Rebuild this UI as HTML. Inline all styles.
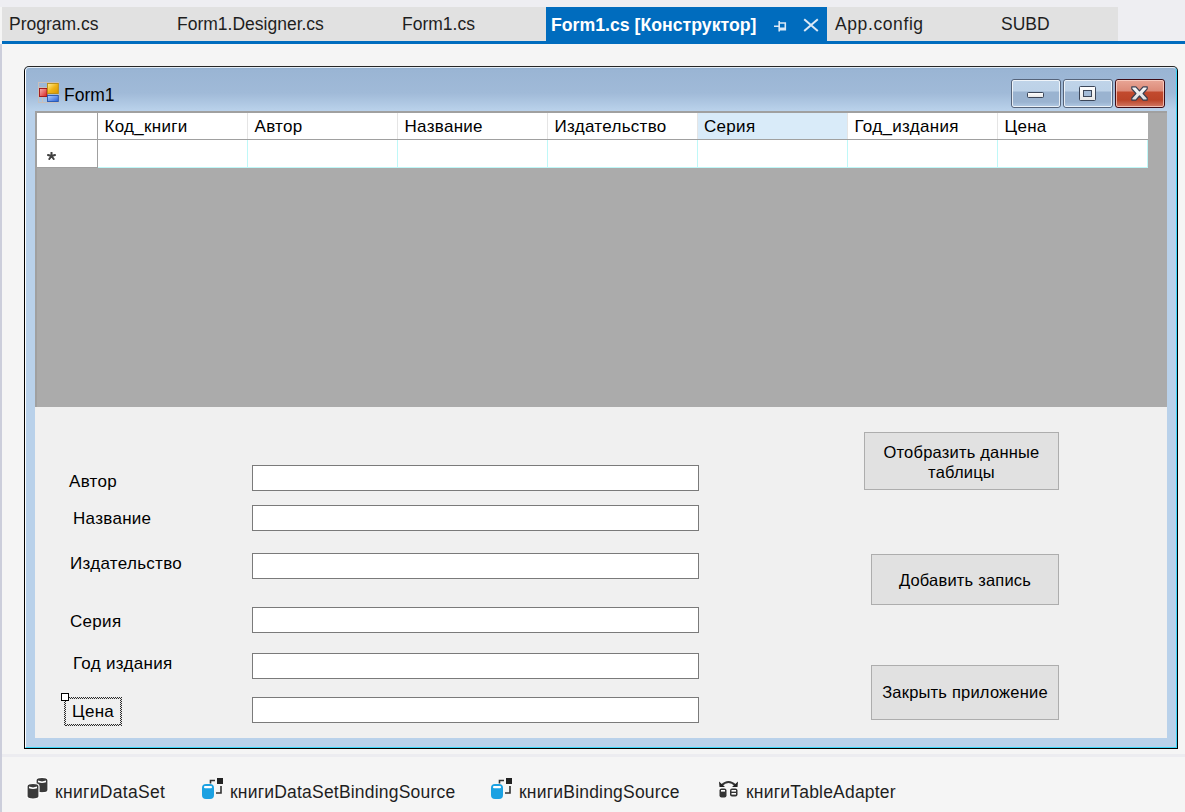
<!DOCTYPE html>
<html><head><meta charset="utf-8">
<style>
*{box-sizing:border-box;margin:0;padding:0}
html,body{width:1185px;height:812px;overflow:hidden;background:#f5f5f5;font-family:"Liberation Sans",sans-serif;color:#000}
.a{position:absolute}
#top{left:0;top:0;width:1185px;height:7px;background:#eeeef2}
#topr{left:1118px;top:0;width:67px;height:41px;background:#eeeef2}
#lstrip{left:0;top:44px;width:2px;height:768px;background:#cccedb}
#tabs{left:2px;top:7px;width:1116px;height:34px;background:#e1e1e1}
#blue{left:2px;top:41px;width:1183px;height:3px;background:#006cbe}
#atab{left:546px;top:7px;width:281px;height:34px;background:#006cbe}
.tt{position:absolute;top:14px;font-size:17.5px;line-height:20px;white-space:nowrap;color:#1e1e1e}
#sep{left:2px;top:754px;width:1183px;height:3px;background:#ececf0}
/* form */
#form{left:24px;top:66px;width:1154px;height:683px;border:1px solid #000;border-top-color:#262626;border-radius:5px 5px 0 0;overflow:hidden;
 background:linear-gradient(#8eaecf 0px,#9ab5d4 3px,#a0bad8 26px,#b9d1ea 43px,#b9d1ea 100%)}
#hl{left:0;top:0;width:1152px;height:681px;border-left:1px solid #fff;border-top:1px solid #e4edf6;border-right:1px solid #3ad6f8;border-bottom:1px solid #3ad6f8;border-radius:4px 4px 0 0}
#client{left:35px;top:111px;width:1132px;height:627px;background:#f0f0f0}
#grid{left:35px;top:111px;width:1132px;height:296px;background:#ababab;border-top:2px solid #a0a0a0;border-left:2px solid #a0a0a0}
.hdr{position:absolute;top:113px;height:26px;background:#fff;border-right:1px solid #e5e5e5}
.row{position:absolute;top:140px;height:28px;background:#fff;border-right:1px solid #bff8f8;border-bottom:1px solid #bff8f8}
.ht{position:absolute;top:117px;font-size:17px;letter-spacing:0.3px;line-height:20px;white-space:nowrap}
.lbl{position:absolute;font-size:17px;letter-spacing:0.3px;line-height:20px;white-space:nowrap}
.tb{position:absolute;left:252px;width:447px;height:26px;border:1px solid #7a7a7a;background:#fff}
.btn{position:absolute;border:1px solid #adadad;background:#e1e1e1;font-size:16.5px;letter-spacing:0.2px;text-align:center;display:flex;align-items:center;justify-content:center;line-height:20px}
.tray{position:absolute;top:782px;font-size:17.5px;letter-spacing:0.2px;line-height:20px;white-space:nowrap;color:#1e1e1e}
.wb{position:absolute;top:79px;width:50px;height:29px;border:1px solid #56647a;border-radius:3px;overflow:hidden}
.wbi{position:absolute;left:0;top:0;width:48px;height:27px;border:1px solid rgba(255,255,255,.75);border-radius:2px}
.chk{background:repeating-conic-gradient(#2a2a2a 0 25%,#e8e8e8 0 50%) 0 0/2px 2px}
</style></head><body>
<div id="top" class="a"></div>
<div id="topr" class="a"></div>
<div id="tabs" class="a"></div>
<div id="atab" class="a"></div>
<div id="blue" class="a"></div>
<div id="lstrip" class="a"></div>
<div class="tt" style="left:9px">Program.cs</div>
<div class="tt" style="left:177px">Form1.Designer.cs</div>
<div class="tt" style="left:402px">Form1.cs</div>
<div class="tt" style="left:551px;top:15px;color:#fff;font-weight:bold;font-size:17.7px">Form1.cs [Конструктор]</div>
<div class="tt" style="left:835px;letter-spacing:0.6px">App.config</div>
<div class="tt" style="left:1001px">SUBD</div>
<!-- pin -->
<svg class="a" style="left:772px;top:19px" width="16" height="14" viewBox="0 0 16 14">
 <path d="M2 7.2H7M7.2 2V12.5M7.5 4H13.3V10.6H7.5M7.5 9.2H13.3" fill="none" stroke="#dce9f6" stroke-width="1.6"/>
</svg>
<!-- close x -->
<svg class="a" style="left:802px;top:18px" width="17" height="15" viewBox="0 0 17 15">
 <path d="M2.2 1.2L15.8 13M15.8 1.2L2.2 13" fill="none" stroke="#dce9f6" stroke-width="2"/>
</svg>

<div id="form" class="a"><div id="hl" class="a"></div></div>
<!-- form icon -->
<svg class="a" style="left:38px;top:82px" width="21" height="21" viewBox="0 0 21 21">
 <defs>
  <linearGradient id="gr" x1="0" y1="0" x2="1" y2="1"><stop offset="0" stop-color="#f6b8b8"/><stop offset="1" stop-color="#d8201c"/></linearGradient>
  <linearGradient id="gy" x1="0" y1="0" x2="1" y2="1"><stop offset="0" stop-color="#fff2a0"/><stop offset=".5" stop-color="#f0b418"/><stop offset="1" stop-color="#d89600"/></linearGradient>
  <linearGradient id="gb" x1="0" y1="0" x2="1" y2="1"><stop offset="0" stop-color="#b0d0ff"/><stop offset="1" stop-color="#2860d8"/></linearGradient>
 </defs>
 <rect x="0.5" y="0.5" width="20" height="20" fill="none" stroke="#c8c0bc" stroke-width="1"/>
 <path d="M4.5 14V20.5M0.5 5.5H9" stroke="#c8c0bc" stroke-width="1"/>
 <rect x="1.5" y="6.5" width="7.5" height="8" fill="url(#gr)" stroke="#a01010" stroke-width="0.9"/>
 <rect x="9.5" y="1.5" width="10.8" height="10" fill="url(#gy)" stroke="#b88a10" stroke-width="0.9"/>
 <rect x="9.5" y="13.5" width="10.8" height="6" fill="url(#gb)" stroke="#2456b0" stroke-width="0.9"/>
</svg>
<div class="a" style="left:64px;top:85px;font-size:17.5px;line-height:20px;color:#000">Form1</div>
<!-- window buttons -->
<div class="wb" style="left:1011px;background:linear-gradient(#c0d4e9 0,#bcd1e7 11px,#9ab3d0 12px,#9ab3d0 22px,#b3cbe5 27px)"><div class="wbi"></div></div>
<div class="a" style="left:1027px;top:92px;width:17px;height:6px;background:linear-gradient(#fff,#e6e6e6);border:1px solid #3c4658;border-radius:1.5px"></div>
<div class="wb" style="left:1063px;background:linear-gradient(#c0d4e9 0,#bcd1e7 11px,#9ab3d0 12px,#9ab3d0 22px,#b3cbe5 27px)"><div class="wbi"></div></div>
<div class="a" style="left:1079px;top:86px;width:17px;height:15px;background:linear-gradient(#fff,#e8e8e8);border:1px solid #3c4658;border-radius:1.5px"></div>
<div class="a" style="left:1083px;top:90px;width:9px;height:7px;background:#a4bcd8;border:1px solid #3c4658"></div>
<div class="wb" style="left:1115px;border-color:#3e0c16;background:linear-gradient(#e8a696 0,#dc8a78 11px,#c24a2e 12px,#bb4428 20px,#d27a66 27px)"><div class="wbi" style="border-color:rgba(255,220,210,.7)"></div></div>
<svg class="a" style="left:1130px;top:85px" width="19" height="17" viewBox="0 0 19 17">
 <defs><linearGradient id="gx" x1="0" y1="0" x2="0" y2="1"><stop offset="0" stop-color="#fafafa"/><stop offset="1" stop-color="#dcdcdc"/></linearGradient></defs>
 <path d="M1.8 1.8H5.9L9.5 5.9L13.1 1.8H17.2V3.9L13.1 8.5L17.2 13V15.1H13.1L9.5 11L5.9 15.1H1.8V13L5.9 8.5L1.8 3.9Z" fill="url(#gx)" stroke="#3a3f50" stroke-width="1.2" stroke-linejoin="round"/>
</svg>

<div id="client" class="a"></div>
<div id="grid" class="a"></div>
<!-- grid header -->
<div class="hdr" style="left:37px;width:61px;border-right:1px solid #a0a0a0"></div>
<div class="hdr" style="left:98px;width:150px"></div>
<div class="hdr" style="left:248px;width:150px"></div>
<div class="hdr" style="left:398px;width:150px"></div>
<div class="hdr" style="left:548px;width:150px"></div>
<div class="hdr" style="left:698px;width:150px;background:#d9ebf9"></div>
<div class="hdr" style="left:848px;width:150px"></div>
<div class="hdr" style="left:998px;width:150px;border-right:none"></div>
<div class="a" style="left:37px;top:139px;width:1111px;height:1px;background:#a0a0a0"></div>
<div class="row" style="left:37px;width:61px;border-right:1px solid #a0a0a0;border-bottom-color:#a0a0a0"></div>
<div class="row" style="left:98px;width:150px"></div>
<div class="row" style="left:248px;width:150px"></div>
<div class="row" style="left:398px;width:150px"></div>
<div class="row" style="left:548px;width:150px"></div>
<div class="row" style="left:698px;width:150px"></div>
<div class="row" style="left:848px;width:150px"></div>
<div class="row" style="left:998px;width:150px"></div>
<div class="ht" style="left:104.5px">Код_книги</div>
<div class="ht" style="left:254.5px">Автор</div>
<div class="ht" style="left:404.5px">Название</div>
<div class="ht" style="left:554.5px">Издательство</div>
<div class="ht" style="left:704px">Серия</div>
<div class="ht" style="left:854.5px">Год_издания</div>
<div class="ht" style="left:1004.5px">Цена</div>
<svg class="a" style="left:47px;top:152px" width="9" height="8" viewBox="0 0 9 8">
 <path d="M4.5 0.5V4M4.5 4L1 3M4.5 4L8 3M4.5 4L2.3 7M4.5 4L6.7 7" stroke="#404040" stroke-width="2" stroke-linecap="round"/>
</svg>

<div class="lbl" style="left:69px;top:472px">Автор</div>
<div class="lbl" style="left:73px;top:509px">Название</div>
<div class="lbl" style="left:70px;top:554px">Издательство</div>
<div class="lbl" style="left:70px;top:612px">Серия</div>
<div class="lbl" style="left:73px;top:654px">Год издания</div>
<div class="lbl" style="left:72px;top:702px">Цена</div>
<!-- selection -->
<div class="a chk" style="left:64px;top:697px;width:58px;height:2px"></div>
<div class="a chk" style="left:64px;top:724px;width:58px;height:2px"></div>
<div class="a chk" style="left:64px;top:697px;width:2px;height:29px"></div>
<div class="a chk" style="left:120px;top:697px;width:2px;height:29px"></div>
<div class="a" style="left:61px;top:693px;width:8px;height:8px;border:1px solid #000;background:#fff"></div>
<div class="tb" style="top:465px"></div>
<div class="tb" style="top:505px"></div>
<div class="tb" style="top:553px"></div>
<div class="tb" style="top:607px"></div>
<div class="tb" style="top:653px"></div>
<div class="tb" style="top:697px"></div>
<div class="btn" style="left:864px;top:432px;width:195px;height:58px;padding-top:1px">Отобразить данные<br>таблицы</div>
<div class="btn" style="left:871px;top:554px;width:188px;height:51px">Добавить запись</div>
<div class="btn" style="left:871px;top:665px;width:188px;height:55px;padding-bottom:1px">Закрыть приложение</div>

<div id="sep" class="a"></div>
<!-- tray icons -->
<svg class="a" style="left:26px;top:777px" width="23" height="23" viewBox="0 0 23 23">
 <g stroke="#fff" stroke-width="1.2">
 <path d="M10 3.2Q10 0.5 16 0.5Q22 0.5 22 3.2V13Q22 15.8 16 15.8Q10 15.8 10 13Z" fill="#3a3a3a"/>
 <path d="M1 9.2Q1 6.5 7 6.5Q13 6.5 13 9.2V19.3Q13 22 7 22Q1 22 1 19.3Z" fill="#3a3a3a"/>
 </g>
 <path d="M12 3.6Q16 5.2 20 3.6V5.2Q16 6.6 12 5.2Z" fill="#fff"/>
 <path d="M3 9.6Q7 11.2 11 9.6V11.2Q7 12.6 3 11.2Z" fill="#fff"/>
</svg>
<div class="tray" style="left:55px;letter-spacing:0.3px">книгиDataSet</div>
<svg class="a" style="left:201px;top:777px" width="24" height="23" viewBox="0 0 24 23">
 <rect x="1" y="7" width="12" height="15" rx="4" fill="#1ba1e2"/>
 <rect x="3" y="9" width="8" height="2.2" rx="1" fill="#fff"/>
 <rect x="16" y="1" width="6" height="6" fill="#222"/>
 <path d="M9.5 6.5V3.5H14M20 9V16H15" fill="none" stroke="#333" stroke-width="1.6"/>
</svg>
<div class="tray" style="left:230px">книгиDataSetBindingSource</div>
<svg class="a" style="left:490px;top:777px" width="24" height="23" viewBox="0 0 24 23">
 <rect x="1" y="7" width="12" height="15" rx="4" fill="#1ba1e2"/>
 <rect x="3" y="9" width="8" height="2.2" rx="1" fill="#fff"/>
 <rect x="16" y="1" width="6" height="6" fill="#222"/>
 <path d="M9.5 6.5V3.5H14M20 9V16H15" fill="none" stroke="#333" stroke-width="1.6"/>
</svg>
<div class="tray" style="left:519px">книгиBindingSource</div>
<svg class="a" style="left:718px;top:779px" width="22" height="20" viewBox="0 0 22 20">
 <path d="M3.5 6.5Q10.5 -0.5 17.5 6.5" fill="none" stroke="#333" stroke-width="1.8"/>
 <path d="M1 2.5L1.5 8H7Z M20 2.5L19.5 8H14Z" fill="#222"/>
 <rect x="1.5" y="9.5" width="7" height="9" rx="2" fill="#333"/>
 <rect x="3" y="11" width="4" height="1.6" fill="#fff"/>
 <rect x="12" y="9.5" width="7.5" height="8" rx="2" fill="#333"/>
 <rect x="13.5" y="11" width="4.5" height="1.6" fill="#fff"/>
 <rect x="13.5" y="14" width="4.5" height="1.6" fill="#fff"/>
</svg>
<div class="tray" style="left:746px">книгиTableAdapter</div>
</body></html>
